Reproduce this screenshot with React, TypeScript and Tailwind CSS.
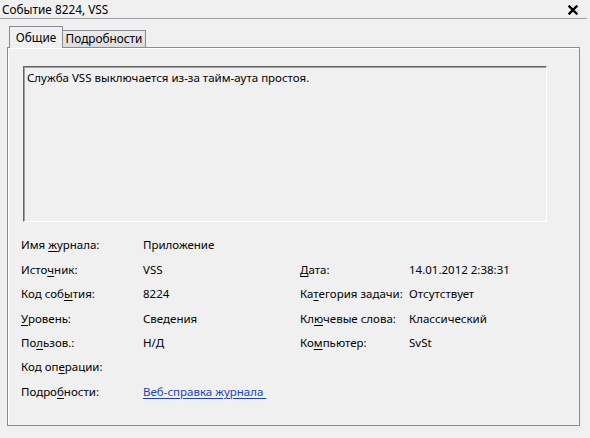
import React from "react";

const U = ({ pre, u, post }: { pre: string; u: string; post: string }) => (
  <span>
    {pre}
    <span className="underline underline-offset-[2px]">{u}</span>
    {post}
  </span>
);

export default function App() {
  return (
    <div className="w-[590px] h-[438px] bg-[#f0f0f0] text-black text-[11.5px] leading-none overflow-hidden font-['Segoe_UI','Noto_Sans','Open_Sans',sans-serif] flex flex-col">
      {/* Title bar */}
      <div className="h-[19px] mr-[3px] flex items-center justify-between pl-[2px] pr-[9px] border-b border-[#a3a3a3]">
        <span className="pt-[1px] text-[11.8px]">Событие 8224, VSS</span>
        <svg width="10" height="10" viewBox="0 0 10 10" className="mt-[1px]">
          <path d="M1.5 1.5 L8.5 8.5 M8.5 1.5 L1.5 8.5" stroke="#000" strokeWidth="2.4" strokeLinecap="square" />
        </svg>
      </div>

      {/* Tabs */}
      <div className="flex items-end ml-[9px] mt-[7px] h-[21px] relative z-10">
        <div className="h-[22px] w-[54px] border border-b-0 border-[#898c95] bg-[#f0f0f0] flex items-center justify-center -mb-[1px]">
          <span className="pt-[1px] text-[11.8px]">Общие</span>
        </div>
        <div className="h-[17px] w-[83px] border border-l-0 border-b-0 border-[#898c95] bg-gradient-to-b from-[#ececec] to-[#dcdcdc] flex items-center justify-center">
          <span className="text-[11.8px]">Подробности</span>
        </div>
      </div>

      {/* Panel */}
      <div className="ml-[7px] w-[573px] h-[379px] border border-[#898c95] shadow-[inset_1px_1px_0_#ffffff] pt-[18px] pl-[15px]">
        <div className="w-[524px] h-[156px] border border-t-[#646464] border-l-[#646464] border-r-white border-b-white shadow-[inset_1px_1px_0_#a0a0a0] pl-[3px] pt-[5px]">
          Служба VSS выключается из-за тайм-аута простоя.
        </div>

        <div className="mt-[11px] -ml-[2px] grid grid-cols-[122px_157px_109px_1fr] auto-rows-[24.4px] items-center">
          <U pre="Имя " u="ж" post="урнала:" />
          <span>Приложение</span>
          <span />
          <span />

          <U pre="Исто" u="ч" post="ник:" />
          <span>VSS</span>
          <U pre="" u="Д" post="ата:" />
          <span>14.01.2012 2:38:31</span>

          <U pre="Код соб" u="ы" post="тия:" />
          <span>8224</span>
          <U pre="Ка" u="т" post="егория задачи:" />
          <span>Отсутствует</span>

          <U pre="" u="У" post="ровень:" />
          <span>Сведения</span>
          <U pre="Кл" u="ю" post="чевые слова:" />
          <span>Классический</span>

          <U pre="По" u="л" post="ьзов.:" />
          <span>Н/Д</span>
          <U pre="Ко" u="м" post="пьютер:" />
          <span>SvSt</span>

          <U pre="Код оп" u="е" post="рации:" />
          <span />
          <span />
          <span />

          <U pre="Подро" u="б" post="ности:" />
          <span className="text-[#1c45b8] underline underline-offset-[2px] whitespace-pre">Веб-справка журнала </span>
          <span />
          <span />
        </div>
      </div>
    </div>
  );
}
